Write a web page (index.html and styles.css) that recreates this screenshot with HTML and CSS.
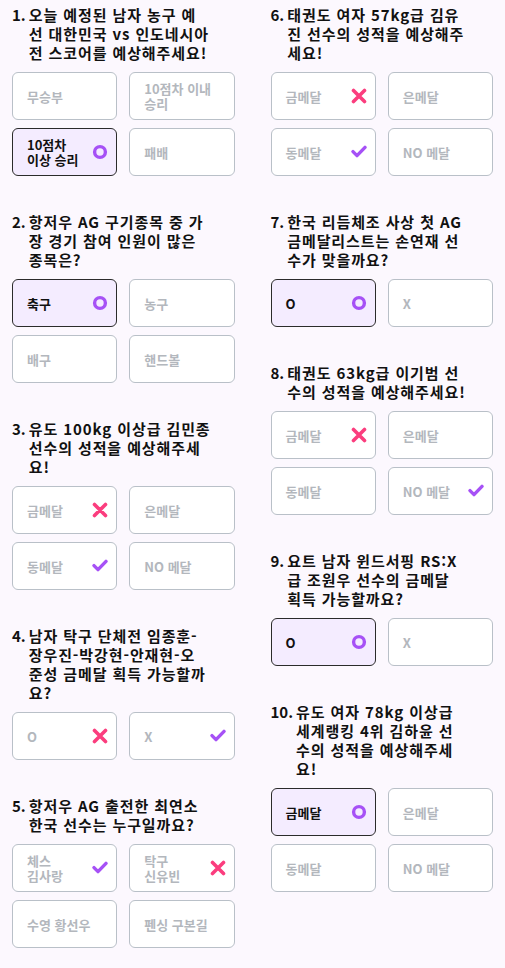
FILE: index.html
```html
<!DOCTYPE html>
<html lang="ko">
<head>
    <meta charset="UTF-8">
    <meta name="viewport" content="width=device-width, initial-scale=1.0">
    <title>항저우 AG 예측 퀴즈</title>
    <link rel="stylesheet" href="styles.css">
</head>
<body>

    <!-- icons -->
    <svg class="defs" width="0" height="0">
        <symbol id="ic-ring" viewBox="0 0 16 16">
            <circle cx="8" cy="8" r="5.4" fill="none" stroke="currentColor" stroke-width="3.4"/>
        </symbol>
        <symbol id="ic-x" viewBox="0 0 16 16">
            <path d="M2.5 2.5 L13.5 13.5 M13.5 2.5 L2.5 13.5" fill="none" stroke="currentColor" stroke-width="3.6" stroke-linecap="round"/>
        </symbol>
        <symbol id="ic-check" viewBox="0 0 16 16">
            <path d="M2 7.6 L6 11.6 L14 3.4" fill="none" stroke="currentColor" stroke-width="3.4" stroke-linecap="round" stroke-linejoin="round"/>
        </symbol>
    </svg>

    <div class="quiz">

        <div class="col">
            <div class="question">
                <div class="q-title"><span class="num">1.</span><span class="txt">오늘 예정된 남자 농구 예<br>선 대한민국 vs 인도네시아<br>전 스코어를 예상해주세요!</span></div>
                <div class="options">
                    <div class="opt"><span>무승부</span></div>
                    <div class="opt"><span>10점차 이내 승리</span></div>
                    <div class="opt picked"><span>10점차 이상 승리</span><svg class="ic ring"><use href="#ic-ring"/></svg></div>
                    <div class="opt"><span>패배</span></div>
                </div>
            </div>

            <div class="question">
                <div class="q-title"><span class="num">2.</span><span class="txt">항저우 AG 구기종목 중 가<br>장 경기 참여 인원이 많은<br>종목은?</span></div>
                <div class="options">
                    <div class="opt picked"><span>축구</span><svg class="ic ring"><use href="#ic-ring"/></svg></div>
                    <div class="opt"><span>농구</span></div>
                    <div class="opt"><span>배구</span></div>
                    <div class="opt"><span>핸드볼</span></div>
                </div>
            </div>

            <div class="question">
                <div class="q-title"><span class="num">3.</span><span class="txt">유도 100kg 이상급 김민종<br>선수의 성적을 예상해주세<br>요!</span></div>
                <div class="options">
                    <div class="opt"><span>금메달</span><svg class="ic wrong"><use href="#ic-x"/></svg></div>
                    <div class="opt"><span>은메달</span></div>
                    <div class="opt"><span>동메달</span><svg class="ic right"><use href="#ic-check"/></svg></div>
                    <div class="opt"><span>NO 메달</span></div>
                </div>
            </div>

            <div class="question">
                <div class="q-title"><span class="num">4.</span><span class="txt">남자 탁구 단체전 임종훈-<br>장우진-박강현-안재현-오<br>준성 금메달 획득 가능할까<br>요?</span></div>
                <div class="options">
                    <div class="opt"><span>O</span><svg class="ic wrong"><use href="#ic-x"/></svg></div>
                    <div class="opt"><span>X</span><svg class="ic right"><use href="#ic-check"/></svg></div>
                </div>
            </div>

            <div class="question">
                <div class="q-title"><span class="num">5.</span><span class="txt">항저우 AG 출전한 최연소<br>한국 선수는 누구일까요?</span></div>
                <div class="options">
                    <div class="opt"><span>체스 김사랑</span><svg class="ic right"><use href="#ic-check"/></svg></div>
                    <div class="opt"><span>탁구 신유빈</span><svg class="ic wrong"><use href="#ic-x"/></svg></div>
                    <div class="opt"><span>수영 황선우</span></div>
                    <div class="opt"><span>펜싱 구본길</span></div>
                </div>
            </div>
        </div>

        <div class="col">
            <div class="question">
                <div class="q-title"><span class="num">6.</span><span class="txt">태권도 여자 57kg급 김유<br>진 선수의 성적을 예상해주<br>세요!</span></div>
                <div class="options">
                    <div class="opt"><span>금메달</span><svg class="ic wrong"><use href="#ic-x"/></svg></div>
                    <div class="opt"><span>은메달</span></div>
                    <div class="opt"><span>동메달</span><svg class="ic right"><use href="#ic-check"/></svg></div>
                    <div class="opt"><span>NO 메달</span></div>
                </div>
            </div>

            <div class="question">
                <div class="q-title"><span class="num">7.</span><span class="txt">한국 리듬체조 사상 첫 AG<br>금메달리스트는 손연재 선<br>수가 맞을까요?</span></div>
                <div class="options">
                    <div class="opt picked"><span>O</span><svg class="ic ring"><use href="#ic-ring"/></svg></div>
                    <div class="opt"><span>X</span></div>
                </div>
            </div>

            <div class="question">
                <div class="q-title"><span class="num">8.</span><span class="txt">태권도 63kg급 이기범 선<br>수의 성적을 예상해주세요!</span></div>
                <div class="options">
                    <div class="opt"><span>금메달</span><svg class="ic wrong"><use href="#ic-x"/></svg></div>
                    <div class="opt"><span>은메달</span></div>
                    <div class="opt"><span>동메달</span></div>
                    <div class="opt"><span>NO 메달</span><svg class="ic right"><use href="#ic-check"/></svg></div>
                </div>
            </div>

            <div class="question">
                <div class="q-title"><span class="num">9.</span><span class="txt">요트 남자 윈드서핑 RS:X<br>급 조원우 선수의 금메달<br>획득 가능할까요?</span></div>
                <div class="options">
                    <div class="opt picked"><span>O</span><svg class="ic ring"><use href="#ic-ring"/></svg></div>
                    <div class="opt"><span>X</span></div>
                </div>
            </div>

            <div class="question">
                <div class="q-title"><span class="num">10.</span><span class="txt">유도 여자 78kg 이상급<br>세계랭킹 4위 김하윤 선<br>수의 성적을 예상해주세<br>요!</span></div>
                <div class="options">
                    <div class="opt picked"><span>금메달</span><svg class="ic ring"><use href="#ic-ring"/></svg></div>
                    <div class="opt"><span>은메달</span></div>
                    <div class="opt"><span>동메달</span></div>
                    <div class="opt"><span>NO 메달</span></div>
                </div>
            </div>
        </div>

    </div>

</body>
</html>
```

FILE: styles.css
```css
body, html {
    margin: 0;
    padding: 0;
    font-family: "Noto Sans CJK KR", "Noto Sans", sans-serif;
    background-color: #fcf8fe; /* 연한 라벤더 */
    color: #111;
}

.defs {
    position: absolute;
    width: 0;
    height: 0;
    overflow: hidden;
}

.quiz {
    display: grid;
    grid-template-columns: 1fr 1fr;
    column-gap: 36px;
    padding: 5px 12px 12px;
}

.col {
    display: flex;
    flex-direction: column;
    gap: 36px;
}

.q-title {
    display: flex;
    gap: 3px;
    font-size: 15px;
    font-weight: 700;
    line-height: 19px;
    letter-spacing: 0.9px;
    margin-bottom: 10px;
}

.q-title .num {
    letter-spacing: 0;
}

.q-title .txt {
    flex: 1;
    white-space: nowrap; /* 줄바꿈은 디자인대로 직접 */
}

.options {
    display: grid;
    grid-template-columns: 1fr 1fr;
    gap: 8px 12px;
}

.opt {
    box-sizing: border-box;
    height: 48px;
    display: flex;
    align-items: center;
    justify-content: space-between;
    gap: 8px;
    padding: 0 8px 0 14px;
    background-color: #fff;
    border: 1px solid #b9c0c8;
    border-radius: 6px;
    color: #b3b7bd;
    font-size: 13px;
    font-weight: 700;
    line-height: 15px;
    word-break: keep-all;
}

.opt.picked {
    background-color: #f4ecff;
    border-color: #2b2b2b;
    color: #111;
}

.ic {
    flex: none;
    width: 16px;
    height: 16px;
}

.ic.ring { color: #a651f6; }
.ic.wrong { color: #fb3d7e; }
.ic.right { color: #a651f6; }
```
